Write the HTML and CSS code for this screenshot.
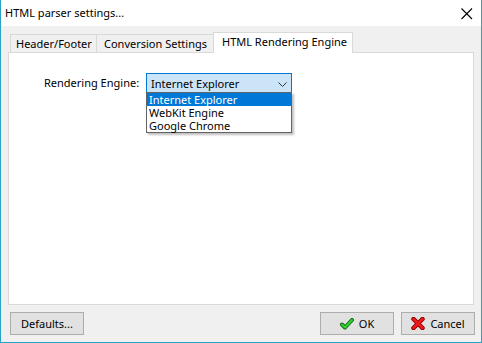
FILE: index.html
```html
<!DOCTYPE html>
<html>
<head>
<meta charset="utf-8">
<link rel="stylesheet" href="styles.css">
</head>
<body>
<div class="window">
  <div class="titlebar">
    <span class="title">HTML parser settings...</span>
    <svg class="close" width="12" height="12" viewBox="0 0 12 12"><path d="M0.5 0.5 L11 11 M11 0.5 L0.5 11" stroke="#000" stroke-width="1.1" fill="none"/></svg>
  </div>
  <div class="body">
    <div class="tabs">
      <div class="tab tab-hf">Header/Footer</div>
      <div class="tab tab-cs">Conversion Settings</div>
      <div class="tab tab-active">HTML Rendering Engine</div>
    </div>
    <div class="panel">
      <div class="row">
        <div class="label">Rendering Engine:</div>
        <div class="combo-wrap">
          <div class="combo">
            <span>Internet Explorer</span>
            <svg class="chev" width="9" height="5" viewBox="0 0 9 5"><path d="M0.5 0.5 L4.5 4.5 L8.5 0.5" stroke="#333" stroke-width="1" fill="none"/></svg>
          </div>
          <ul class="list">
            <li class="sel">Internet Explorer</li>
            <li>WebKit Engine</li>
            <li>Google Chrome</li>
          </ul>
        </div>
      </div>
    </div>
    <div class="buttons">
      <button class="btn">Defaults...</button>
      <div class="spacer"></div>
      <button class="btn btn-ok"><svg width="14" height="12" viewBox="0 0 14 12"><path d="M2 6.5 L5 9.5 L12 2" stroke="#0d6b0d" stroke-width="4" stroke-linecap="round" stroke-linejoin="round" fill="none"/><path d="M2 6.5 L5 9.5 L12 2" stroke="#33d433" stroke-width="2" stroke-linecap="round" stroke-linejoin="round" fill="none"/></svg><span>OK</span></button>
      <button class="btn btn-cancel"><svg width="14" height="13" viewBox="0 0 14 13"><path d="M2.5 2 L11.5 11 M11.5 2 L2.5 11" stroke="#8a0000" stroke-width="4.5" stroke-linecap="round" fill="none"/><path d="M2.5 2 L11.5 11 M11.5 2 L2.5 11" stroke="#f01a1a" stroke-width="2.5" stroke-linecap="round" fill="none"/></svg><span>Cancel</span></button>
    </div>
  </div>
</div>
</body>
</html>
```
FILE: styles.css
```css
html, body {
  margin: 0;
  padding: 0;
  background: #ffffff;
}
.window {
  width: 482px;
  height: 343px;
  box-sizing: border-box;
  border: 1px solid #2aa2c6;
  border-top: none;
  display: flex;
  flex-direction: column;
  font-family: "Noto Sans", "Open Sans", sans-serif;
  font-size: 11px;
  color: #000;
}
.titlebar {
  height: 26px;
  flex: none;
  background: #fff;
  display: flex;
  align-items: center;
  padding-left: 4px;
  position: relative;
}
.title {
  font-size: 11px;
  line-height: 16px;
  margin-top: -1px;
}
.close {
  position: absolute;
  left: 460px;
  top: 8px;
}
.body {
  flex: 1;
  background: #f0f0f0;
  padding: 6px 7px 7px 7px;
  display: flex;
  flex-direction: column;
}
.tabs {
  height: 20px;
  display: flex;
  align-items: flex-end;
  margin-left: 2px;
  flex: none;
}
.tab {
  box-sizing: border-box;
  height: 18px;
  border: 1px solid #d9d9d9;
  border-bottom: none;
  background: #f0f0f0;
  padding-left: 5px;
  line-height: 18px;
  white-space: nowrap;
}
.tab-hf { width: 87px; }
.tab-cs { width: 118px; margin-left: -1px; padding-left: 7px; }
.tab-active {
  width: 140px;
  height: 21px;
  margin-left: -1px;
  margin-bottom: -1px;
  background: #fff;
  position: relative;
  z-index: 1;
  padding-left: 8px;
  line-height: 17px;
}
.panel {
  height: 253px;
  box-sizing: border-box;
  border: 1px solid #d9d9d9;
  background: #fff;
  flex: none;
}
.row {
  display: grid;
  grid-template-columns: 102px 146px;
  margin-top: 20px;
  margin-left: 35px;
  align-items: center;
}
.label {
  line-height: 16px;
  white-space: nowrap;
  margin-top: -1px;
}
.combo-wrap {
  position: relative;
}
.combo {
  box-sizing: border-box;
  height: 20px;
  border: 1px solid #0078d7;
  background: #cce4f7;
  display: flex;
  align-items: center;
  justify-content: space-between;
  padding: 1px 4px 0 4px;
  white-space: nowrap;
}
.chev { margin-top: 1px; }
.list {
  position: absolute;
  left: 0;
  top: 19px;
  width: 146px;
  box-sizing: border-box;
  margin: 0;
  padding: 0;
  list-style: none;
  background: #fff;
  border: 1px solid #646464;
  box-shadow: 2px 2px 2px rgba(0,0,0,0.25);
}
.list li {
  height: 13px;
  line-height: 13px;
  padding-left: 2px;
  white-space: nowrap;
}
.list li.sel {
  background: #0078d7;
  color: #fff;
}
.buttons {
  margin-top: 7px;
  height: 23px;
  display: flex;
  margin-left: 2px;
  margin-right: -1px;
  flex: none;
}
.spacer { flex: 1; }
.btn {
  width: 74px;
  height: 23px;
  box-sizing: border-box;
  border: 1px solid #adadad;
  background: #e1e1e1;
  font-family: inherit;
  font-size: 11px;
  color: #000;
  padding: 0;
  display: flex;
  align-items: center;
  justify-content: center;
  gap: 5px;
}
.btn-cancel { margin-left: 7px; }
```
